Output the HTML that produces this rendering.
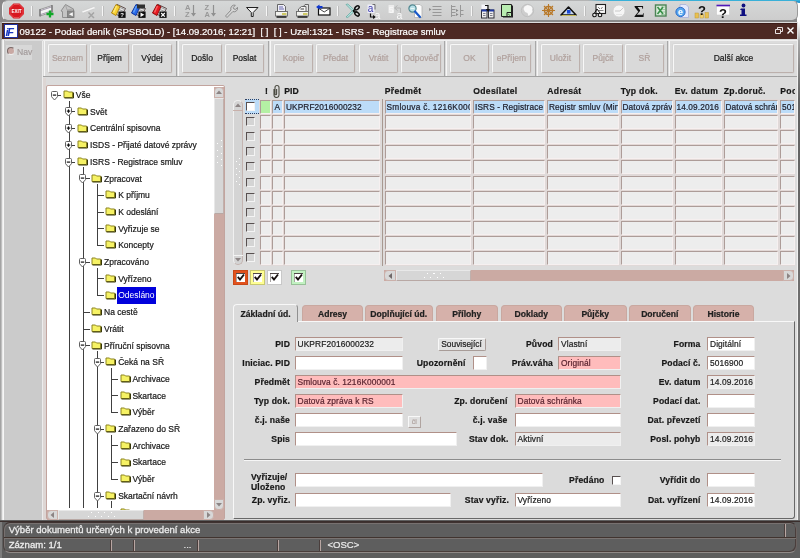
<!DOCTYPE html><html><head><meta charset="utf-8"><title>Podací deník</title><style>
*{box-sizing:border-box}
html,body{margin:0;padding:0}
body{width:800px;height:558px;overflow:hidden;position:relative;background:#dcdcdc;font-family:"Liberation Sans",Arial,sans-serif;font-size:8.5px;color:#202020;-webkit-text-stroke-width:0.2px}
#root{position:absolute;left:0;top:0;width:800px;height:558px;overflow:hidden;will-change:transform;opacity:0.999}
.a{position:absolute}
#tb{left:2px;top:0;width:796px;height:21px;background:linear-gradient(#d5d7d7,#cdcdcd);border-radius:6px;border:1px solid #f4f4f4;border-top-color:#b4b4b4;border-bottom-color:#8a8a8a;border-right-color:#9a9a9a}
.sep{position:absolute;top:5px;width:2px;height:11px;border-left:1px solid #f8f8f8;border-right:1px solid #b8b8b8}
.ic{position:absolute;top:0;overflow:visible}
#title{left:1.5px;top:22.6px;width:795.5px;height:16.9px;background:#4d2923;border-top:1px solid #3c1c18;color:#fff;font-size:9.55px;line-height:15.5px;white-space:pre}
#title span{position:absolute;left:18px;top:0}
#logo{left:2px;top:0;width:14px;height:14.5px;background:#fff;border:1px solid #2030a0}
#bar{left:43px;top:40px;width:755px;height:37px;background:#dcdcdc;border-bottom:1px solid #a2a2a2;border-top:1px solid #f0f0f0}
.grp{position:absolute;top:0;height:35px;border-left:1px solid #f6f6f6;border-right:1px solid #a8a8a8}
.btn{position:absolute;top:44px;height:29px;background:#d9d9d9;border:1px solid;border-color:#f8f8f8 #bcb0ac #bcb0ac #f8f8f8;border-radius:2px;text-align:center;line-height:27px;font-size:8.5px;color:#181818;box-shadow:0 0 0 1px #d6d6d6}
.btn.dis{color:#b0a09c}
#nav{left:4px;top:41px;width:38px;height:479px;background:#cbcbcb}
#tree{left:45.5px;top:85px;width:179.5px;height:435px;background:#fff;border:1px solid #c2a49e;border-left-width:1.5px;border-radius:2px}
.tr{position:absolute;height:17px;line-height:17px;font-size:8.5px;white-space:nowrap;color:#181818}
.tr.sel{background:#0000dc;color:#fff;-webkit-text-stroke-width:0;padding:0 1px;margin-left:-1px}
.vl{position:absolute;width:1px;background:#404040}
.hl{position:absolute;height:1px;background:#404040}
.cell{position:absolute;height:14px;background:#ededed;border:1px solid;border-color:#ad9c98 #f6f0f0 #f6f0f0 #ad9c98;box-shadow:0 0 0 0.5px #e6d8d5;letter-spacing:0.1px;font-size:8.3px;line-height:12px;padding-left:1px;white-space:nowrap;overflow:hidden;color:#1c1c28}
.cell.act{background:#bcdcf8}
.hd{position:absolute;top:84.5px;font-weight:bold;font-size:8.6px;line-height:12px;color:#181818;white-space:nowrap}
.cb{position:absolute;width:9px;height:9px;background:#d4d4d4;border:1px solid;border-color:#585050 #f4f4f4 #f4f4f4 #585050}
.tab{position:absolute;top:305px;height:16px;padding-top:1px;background:#d6b1aa;border-radius:4px 4px 0 0;text-align:center;font-weight:bold;font-size:8.6px;line-height:14px;color:#202020;border:1px solid #c9a8a0;border-bottom:none}
.tab.on{top:304px;height:18px;line-height:17px;background:#dbdbdb;border:1px solid #f8f8f8;border-right-color:#909090;border-bottom:none;z-index:3}
#pane{left:233px;top:321px;width:562px;height:197.5px;background:#dbdbdb;border:1px solid;border-color:#f8f8f8 #686868 #686868 #f8f8f8;border-right-width:1.5px;border-bottom-width:1.5px;border-radius:0 0 3px 0}
.lb{position:absolute;letter-spacing:0.15px;font-weight:bold;font-size:8.6px;line-height:14px;height:14px;text-align:right;white-space:nowrap;color:#181818}
.f{position:absolute;letter-spacing:0.1px;height:14px;background:#fff;border:1px solid;border-color:#b09088 #f0f0f0 #f0f0f0 #b09088;font-size:8.4px;line-height:12px;padding-left:2px;white-space:nowrap;overflow:hidden;color:#202020}
.f.g{background:#ececec}
.f.p{background:#ffbcbc;color:#5a2430}
#status{left:0;top:520px;width:800px;height:38px;background:#5e5e5e}
#sbox{left:3px;top:522px;width:793.5px;height:30.5px;border:1px solid;border-color:#3e3230 #6a6260 #908a88 #4a4240;border-radius:7px;box-shadow:inset 1px 1px 0 #777170,inset -1px -1px 0 #4a3e3c}
</style></head><body><div id="root">
<div class="a" style="left:0;top:0;width:800px;height:22px;background:linear-gradient(90deg,#8a8888 0,#8a8888 797px,#fff 797px)"></div>
<div class="a" style="left:0;top:22px;width:2px;height:18px;background:#a4a4a4"></div>
<div class="a" style="left:798px;top:22px;width:2px;height:18px;background:linear-gradient(#fff,#b0b0b0)"></div>
<div class="a" id="tb"></div>
<svg class="a" style="left:0;top:0" width="800" height="22" viewBox="0 0 800 22">
<g fill="none" stroke-width="1">
<path d="M31.5 6v10M102.5 6v10M174.5 6v10M266.5 6v10M337.5 6v10M471.5 6v10M584.5 6v10" stroke="#f6f6f6"/>
<path d="M32.5 6v10M103.5 6v10M175.5 6v10M267.5 6v10M338.5 6v10M472.5 6v10M585.5 6v10" stroke="#bdbdbd"/>
</g>
<!-- exit -->
<g transform="translate(9,3.5)"><path d="M4.5 0h6L15 4.5v6L10.5 15h-6L0 10.5v-6z" fill="#d81820"/><path d="M4.9 1h5.2L14 4.9v5.2L10.1 14H4.9L1 10.1V4.9z" fill="none" stroke="#f08080" stroke-width="0.5"/><text x="7.5" y="9.3" font-size="4.6" font-weight="bold" fill="#fff" text-anchor="middle">EXIT</text></g>
<!-- insert record -->
<g transform="translate(39,4)"><path d="M1 5.5L13 1.5v6.5L1 12z" fill="#f4f4f4" stroke="#9a9a9a" stroke-width="1"/><path d="M1 6.8L13 2.8M1 10.7L13 6.7" stroke="#a8a0b0" stroke-width="1.2"/><path d="M1 5v7.5M13 1v7.5" stroke="#686868" stroke-width="1.1"/><path d="M11 6.5v7M7.5 10h7" stroke="#10a828" stroke-width="2.3"/></g>
<!-- house -->
<g transform="translate(60,4)"><path d="M1 7L5.5 0.5 13.5 5v8.5H2.5V7.5z" fill="#c4c4c4" stroke="#8e8e8e" stroke-width="1"/><path d="M5.5 0.5L7 6l6.5-1" fill="none" stroke="#a0a0a0" stroke-width="0.8"/><rect x="7.5" y="7" width="6.5" height="6.5" fill="#8a8a8a" stroke="#787878" stroke-width="0.8"/><path d="M12.8 8.3v4l-4-2z" fill="#fafafa"/></g>
<!-- delete record (faded) -->
<g transform="translate(82,5)"><path d="M0.5 7L12.5 2.5" stroke="#f6f6f6" stroke-width="2.4"/><path d="M0.5 5.8L12.5 1.3M0.5 8.3L12.5 3.8" stroke="#c8c8c8" stroke-width="0.7"/><path d="M6.5 7.5l5.5 5.5M12 7.5l-5.5 5.5" stroke="#a4a4a4" stroke-width="1.5"/></g>
<!-- folders -->
<g transform="translate(111,4)"><path d="M6 0.5l8.5 4-4.5 8-9-4z" fill="#e4e4e4" stroke="#584848" stroke-width="1"/><path d="M8 3l5 2.3M7 5l5 2.3" stroke="#888" stroke-width="0.8"/><path d="M5 0.5l4 2-4 9-4.5-2.5z" fill="#f8d030" stroke="#b08818" stroke-width="1"/><path d="M5.5 2L2.5 8.5" stroke="#fce878" stroke-width="1.5"/><rect x="7.4" y="7.5" width="7.2" height="6.4" fill="#101010"/><text x="11" y="13.2" font-size="6" font-weight="bold" fill="#fff" text-anchor="middle">?</text></g>
<g transform="translate(131,4)"><path d="M6 0.5l8.5 4-4.5 8-9-4z" fill="#e4e4e4" stroke="#584848" stroke-width="1"/><path d="M8 3l5 2.3M7 5l5 2.3" stroke="#888" stroke-width="0.8"/><path d="M5 0.5l4 2-4 9-4.5-2.5z" fill="#2868e8" stroke="#1038a0" stroke-width="1"/><path d="M5.5 2L2.5 8.5" stroke="#60a0f8" stroke-width="1.5"/><rect x="6" y="0.5" width="8" height="4" fill="#303030"/><rect x="7.4" y="7.5" width="7.2" height="6.4" fill="#101010"/><path d="M9.5 8.5v4.4l3.8-2.2z" fill="#fff"/></g>
<g transform="translate(152,4)"><path d="M6 0.5l8.5 4-4.5 8-9-4z" fill="#e4e4e4" stroke="#584848" stroke-width="1"/><path d="M8 3l5 2.3M7 5l5 2.3" stroke="#888" stroke-width="0.8"/><path d="M5 0.5l4 2-4 9-4.5-2.5z" fill="#e81820" stroke="#901010" stroke-width="1"/><path d="M5.5 2L2.5 8.5" stroke="#f86060" stroke-width="1.5"/><rect x="7.4" y="7.5" width="7.2" height="6.4" fill="#101010"/><path d="M9.2 9l3.6 3.6M12.8 9l-3.6 3.6" stroke="#fff" stroke-width="1.3"/></g>
<!-- sort -->
<g fill="#989898" font-size="7.5" font-weight="bold"><text x="185" y="10">A</text><text x="185" y="17">Z</text><text x="204.5" y="10">Z</text><text x="204.5" y="17">A</text></g>
<path d="M193.5 5v10.5M213.5 5v10.5" stroke="#909090" stroke-width="1.2"/><path d="M191 13h5l-2.5 3.5zM211 13h5l-2.5 3.5z" fill="#909090"/>
<!-- wrench -->
<g transform="translate(225,4)"><path d="M0.5 12L6 6A3.6 3.6 0 0 1 10.3 1.2L8.3 3.5 8.9 5 10.6 5.4 12.5 3.3A3.6 3.6 0 0 1 7.8 7.6L2 13.5z" fill="#d6d6d6" stroke="#8c8c8c" stroke-width="1" stroke-linejoin="round"/></g>
<!-- funnel -->
<path d="M246.5 7.5h11.5l-4.8 5v4h-1.9v-4z" fill="#f4f4f4" stroke="#202020" stroke-width="1" stroke-linejoin="round"/>
<!-- printer 1 -->
<g transform="translate(275,4)"><path d="M2.5 7.5V0.5h6l2 2v5z" fill="#f0f0f8" stroke="#585858" stroke-width="0.9"/><path d="M4 3h4M4 5h5" stroke="#6868b0" stroke-width="1"/><rect x="0.5" y="7.5" width="12" height="4.5" fill="#f2f2ee" stroke="#686868" stroke-width="0.9"/><path d="M7 10h4.5" stroke="#c4bc38" stroke-width="1.5"/><path d="M1.5 13h10" stroke="#181818" stroke-width="1.5"/></g>
<!-- printer 2 -->
<g transform="translate(296,4)"><path d="M6 4.5L9 0.5h3.5v7" fill="#e4e4e4" stroke="#585858" stroke-width="0.9"/><path d="M2.5 7.5V5L5.5 2.5h4.5v5z" fill="#f4f4f4" stroke="#585858" stroke-width="0.9"/><path d="M4.5 5h3.5" stroke="#404040" stroke-width="1"/><rect x="0.5" y="7.5" width="12" height="4.5" fill="#f2f2ee" stroke="#686868" stroke-width="0.9"/><path d="M7 10h4.5" stroke="#c4bc38" stroke-width="1.5"/><path d="M1.5 13h10" stroke="#181818" stroke-width="1.5"/></g>
<!-- mail -->
<g transform="translate(316,4.5)"><rect x="2.5" y="3.5" width="11.5" height="7" fill="#fff" stroke="#101010" stroke-width="1.2"/><path d="M3 4l5.2 3.5 5.3-3.5" fill="none" stroke="#303030" stroke-width="0.9"/><path d="M0 2.5l3.5-2.5v1.5h3v2.2h-3V5z" fill="#1038d0"/></g>
<!-- scissors -->
<g transform="translate(346,4)"><path d="M0 0.5L1.8 0 8.5 6.2 7 7.5z" fill="#b4e0dc" stroke="#5aa49c" stroke-width="0.7"/><path d="M0 13L1.8 13.5 8.5 7.3 7 6z" fill="#b4e0dc" stroke="#5aa49c" stroke-width="0.7"/><g fill="none" stroke="#101010" stroke-width="1.5"><ellipse cx="11" cy="3.8" rx="2.5" ry="1.6" transform="rotate(-40 11 3.8)"/><ellipse cx="11" cy="10" rx="2.5" ry="1.6" transform="rotate(40 11 10)"/><path d="M7 6.8l2.5-1.5M7 6.8l2.5 1.8"/></g></g>
<!-- copy a -->
<g transform="translate(367,3)"><rect x="0.5" y="1.5" width="7" height="8.5" fill="#f0f0fa"/><text x="0.8" y="9" font-size="10" fill="#3838a8">a</text><text x="7.5" y="16" font-size="10.5" fill="#fbfbfb">a</text><path d="M3.5 10.5v3.5h3" fill="none" stroke="#101010" stroke-width="1.2"/><path d="M6 12l3 2-3 2z" fill="#101010"/><path d="M5.5 1.5h2.5v5" fill="none" stroke="#404040" stroke-width="0.7"/></g>
<!-- faded paste -->
<g transform="translate(388,3)"><rect x="0.5" y="2" width="5.5" height="8" fill="#ececec"/><text x="0.8" y="9.5" font-size="9" fill="#fafafa">5</text><text x="8.5" y="16" font-size="10.5" fill="#fafafa">a</text><path d="M7 5h5.5v5" fill="none" stroke="#b4b4b4" stroke-width="1"/><path d="M9.5 2.5L6.5 5l3 2.5" fill="none" stroke="#b4b4b4" stroke-width="1"/></g>
<!-- search -->
<g transform="translate(408,3.5)"><path d="M6.5 1h5.5l2 2v11H6.5z" fill="#fcfcfc" stroke="#b0b0b0" stroke-width="0.8"/><circle cx="4.5" cy="5" r="3.6" fill="#b8e0e8" stroke="#508890" stroke-width="1.2"/><path d="M2.5 5h4" stroke="#e8f8f8" stroke-width="1"/><path d="M7 8l5 5.5" stroke="#1858c8" stroke-width="2.2" stroke-linecap="round"/></g>
<!-- list -->
<g stroke="#989898" stroke-width="1" fill="none"><path d="M432.5 6.5h9M432.5 9.5h9M432.5 12.5h9M432.5 15.5h9"/></g><path d="M429 8l2.5 1.5-2.5 1.5z" fill="#8c8c8c"/>
<!-- tree -->
<g stroke="#989898" stroke-width="1" fill="none"><path d="M451.5 5v12M451.5 6.5h4M451.5 9.5h4M451.5 12.5h4M451.5 15.5h4M460.5 5v12M460.5 10.5h3M460.5 14.5h3"/></g><path d="M456 9l2.5 1.5-2.5 1.5zM456 13l2.5 1.5-2.5 1.5z" fill="#8c8c8c"/>
<!-- blue boxes -->
<g transform="translate(481,4)"><rect x="0.5" y="0.5" width="5.5" height="5" fill="#f6f6fa"/><rect x="0.5" y="6" width="5.5" height="8" fill="#eeeeee" stroke="#303038" stroke-width="1"/><rect x="7.5" y="6" width="5.5" height="8" fill="#eeeeee" stroke="#303038" stroke-width="1"/><path d="M0.5 6.5h5.5M7.5 6.5h5.5" stroke="#2038a0" stroke-width="1.8"/><path d="M2 9.5h2.5M2 11.5h2.5M9 9.5h2.5M9 11.5h2.5" stroke="#707080" stroke-width="0.9"/><path d="M4 1.5h3v4" fill="none" stroke="#101010" stroke-width="1.2"/><path d="M4.8 5h4.4l-2.2 3z" fill="#101010"/></g>
<!-- green note -->
<g transform="translate(501,4)"><path d="M2 1.5h10v12h-10z" fill="#202020"/><path d="M0.5 0.5h10v12h-10z" fill="#b8ecb0" stroke="#202020" stroke-width="1"/><path d="M6 12.5v-4h4.5" fill="none" stroke="#202020" stroke-width="1"/><path d="M7 10l2 1.5" stroke="#406040" stroke-width="0.8"/></g>
<!-- globe -->
<g transform="translate(521,4)"><circle cx="6.5" cy="6.5" r="6.2" fill="#cdcdcd" stroke="#bcbcbc" stroke-width="0.8"/><path d="M3.5 2.5l3-1.5 3.5 1 1.5 2-.5 2 .5 1.5-1.5 2.5-2.5 2-1-3-2.5-1L2.5 5z" fill="#f8f8f8"/></g>
<!-- wheel -->
<g transform="translate(542,4)" stroke="#b87828" fill="none"><circle cx="6.5" cy="6.5" r="4" stroke-width="1.6"/><circle cx="6.5" cy="6.5" r="1.3" fill="#c87818" stroke-width="0.8"/><path d="M6.5 0v13M0 6.5h13M2 2l9 9M11 2l-9 9" stroke-width="1.1"/></g>
<!-- triangle -->
<g transform="translate(561,6.5)"><path d="M7.5 0.5L15 8.5H0z" fill="#c8d8f0" stroke="#101010" stroke-width="1.6" stroke-linejoin="round"/><path d="M0.5 9h14.5" stroke="#e8d860" stroke-width="0.8"/><rect x="6" y="3.5" width="3.5" height="3.5" fill="#1848d8"/></g>
<!-- doc glasses -->
<g transform="translate(592,4)"><rect x="4" y="0.5" width="9.5" height="9" fill="#f8f8f8" stroke="#202020" stroke-width="1.1"/><path d="M6 3l2 2M10.5 3l-1.5 2M6.5 6.5h5" stroke="#606060" stroke-width="0.8"/><circle cx="2.5" cy="11" r="1.8" fill="#e8e8e8" stroke="#101010" stroke-width="1.1"/><circle cx="8" cy="11" r="1.8" fill="#e8e8e8" stroke="#101010" stroke-width="1.1"/><path d="M2.5 9L5 5l3 4" fill="none" stroke="#101010" stroke-width="1"/></g>
<!-- round white -->
<g transform="translate(613,4.5)"><circle cx="6" cy="6.5" r="6" fill="#f6f6f6" stroke="#d0d0d0" stroke-width="0.8"/><path d="M2 6.5h5l3-3" fill="none" stroke="#c8c8c8" stroke-width="1"/><path d="M3.5 10h5" stroke="#d4d4d4" stroke-width="1" stroke-dasharray="1 1"/></g>
<!-- sigma -->
<text x="634" y="16.5" font-size="16" font-weight="bold" font-family="Liberation Serif, serif" fill="#101010">Σ</text>
<!-- excel -->
<g transform="translate(655,4.5)"><rect x="0.5" y="0.5" width="10.5" height="11" fill="#dcecdc" stroke="#4c8454" stroke-width="1.4"/><path d="M6 2.5h4M6 5h4M6 7.5h4M6 10h4" stroke="#90c098" stroke-width="0.8"/><path d="M2.5 2.5L8 9.5M8 2.5L2.5 9.5" stroke="#389048" stroke-width="1.6"/></g>
<!-- IE -->
<g transform="translate(675,4)"><path d="M5 0.5h6l2.5 2.5v10.5H5z" fill="#e4e8fc" stroke="#a8b0d8" stroke-width="0.8"/><circle cx="5.5" cy="8" r="4.6" fill="#58a8f0" stroke="#2868c8" stroke-width="1"/><text x="5.5" y="11" font-size="9" font-weight="bold" fill="#fff" text-anchor="middle">e</text></g>
<!-- ? gold -->
<g transform="translate(694,3)"><rect x="1" y="10" width="3.5" height="5" fill="#e8c050" stroke="#c09830" stroke-width="0.5"/><rect x="6" y="11" width="3.5" height="4" fill="#f0d070" stroke="#c09830" stroke-width="0.5"/><rect x="11" y="9.5" width="3.5" height="5.5" fill="#e8c050" stroke="#c09830" stroke-width="0.5"/><text x="8" y="11.5" font-size="13" font-weight="bold" fill="#101010" text-anchor="middle">?</text></g>
<!-- ? box -->
<g transform="translate(716,4)"><rect x="0.5" y="2" width="13" height="9" fill="#fcfcfc" stroke="#c8c8c8" stroke-width="0.6"/><path d="M0.5 1.5h13.5" stroke="#5018b8" stroke-width="1.6"/><text x="7" y="13.5" font-size="13" font-weight="bold" fill="#101010" text-anchor="middle">?</text></g>
<!-- i -->
<g fill="#101080"><circle cx="743.5" cy="5.5" r="1.9"/><path d="M741 8.5h4v6h1.5v1.5h-6.5v-1.5h1.5v-4.5h-1.5z"/></g>
</svg>

<div class="a" style="left:588px;top:0;width:212px;height:1px;background:linear-gradient(90deg,#b4b4b4,#38b0d8 20px);z-index:5"></div>
<div class="a" style="left:796px;top:0;width:4px;height:3px;background:#2898d0;z-index:4;border-radius:0 0 0 3px"></div>
<div class="a" id="title"><div class="a" id="logo"><svg style="position:absolute;left:0;top:0" width="12" height="13" viewBox="0 0 12 13"><text x="0.5" y="10.5" font-size="11" font-weight="bold" font-style="italic" fill="#1838c0" letter-spacing="-1.2">iF</text></svg></div><span>09122 - Podací deník (SPSBOLD) - [14.09.2016; 12:21]  [ ]  [ ] - Uzel:1321 - ISRS - Registrace smluv</span></div>
<svg class="a" style="left:770px;top:23px" width="28" height="16" viewBox="0 0 28 16"><g fill="none" stroke="#e8e0e0" stroke-width="1"><path d="M5.5 6.5h5v4h-5z"/><path d="M7.5 6.5v-2h5v4h-2"/></g><path d="M17.5 4.5l6 6M23.5 4.5l-6 6" stroke="#fff" stroke-width="1.4"/></svg>
<div class="a" style="left:0;top:40px;width:4.5px;height:480px;background:linear-gradient(90deg,#a0a0a0 0,#a8a8a8 1px,#d8d8d8 2px,#fafafa 3px,#f4f4f4 4px,#cbcbcb 4.5px)"></div>
<div class="a" id="nav"></div>
<div class="a" style="left:6px;top:45px;width:26px;height:15px;background:#d8d8d8"></div>
<div class="a" style="left:7px;top:47px;width:8px;height:8px;border-radius:50%;background:#c9a9a4;border:1px solid #7a6a68;border-bottom-color:#f0f0f0;border-right-color:#e0e0e0"></div>
<div class="a" style="left:17px;top:46px;font-size:8.6px;line-height:12px;color:#a49c9c">Nav</div>
<div class="a" style="left:42px;top:41px;width:1px;height:479px;background:#ececec"></div>
<div class="a" style="left:43px;top:78px;width:3px;height:442px;background:#ddd6d4"></div>
<div class="a" id="bar"></div>
<div class="grp" style="left:44px;top:41px;width:133px"></div>
<div class="grp" style="left:178px;top:41px;width:91px"></div>
<div class="grp" style="left:270px;top:41px;width:175px"></div>
<div class="grp" style="left:446px;top:41px;width:90px"></div>
<div class="grp" style="left:537px;top:41px;width:131px"></div>
<div class="grp" style="left:669px;top:41px;width:129px"></div>
<div class="btn dis" style="left:48px;width:39px">Seznam</div>
<div class="btn" style="left:90px;width:39px">Příjem</div>
<div class="btn" style="left:132px;width:40px">Výdej</div>
<div class="btn" style="left:182px;width:40px">Došlo</div>
<div class="btn" style="left:225px;width:39px">Poslat</div>
<div class="btn dis" style="left:274px;width:39px">Kopie</div>
<div class="btn dis" style="left:316px;width:39px">Předat</div>
<div class="btn dis" style="left:359px;width:39px">Vrátit</div>
<div class="btn dis" style="left:401px;width:40px">Odpověď</div>
<div class="btn dis" style="left:450px;width:39px">OK</div>
<div class="btn dis" style="left:492px;width:39px">ePříjem</div>
<div class="btn dis" style="left:541px;width:39px">Uložit</div>
<div class="btn dis" style="left:583px;width:40px">Půjčit</div>
<div class="btn dis" style="left:625px;width:39px">SŘ</div>
<div class="btn" style="left:673px;width:121px">Další akce</div>
<div class="a" id="tree"></div>
<div class="a" style="left:47px;top:86px;width:166px;height:424px;overflow:hidden">
<div class="vl" style="left:21.5px;top:14.5px;height:407.34px"></div>
<div class="vl" style="left:35.8px;top:81.3px;height:340.54px"></div>
<div class="vl" style="left:50.1px;top:98px;height:61.8px"></div>
<div class="vl" style="left:50.1px;top:181.5px;height:28.4px"></div>
<div class="vl" style="left:50.1px;top:265px;height:156.84px"></div>
<div class="vl" style="left:64.4px;top:281.7px;height:45.1px"></div>
<div class="vl" style="left:64.4px;top:348.5px;height:45.1px"></div>
<div class="vl" style="left:64.4px;top:415.3px;height:6.54px"></div>
<div class="hl" style="left:10.2px;top:8.7px;width:4.3px"></div>
<svg class="a" style="left:3.7px;top:4.7px" width="8" height="10" viewBox="0 0 8 10"><path d="M0.5 1.5Q0.5 0.5 1.5 0.5h4Q6.5 0.5 6.5 1.5v4.2L3.5 9 0.5 5.7z" fill="#fff" stroke="#606060" stroke-width="1"/><path d="M1.8 4.1h3.4" stroke="#101010" stroke-width="1.2"/></svg>
<svg class="a" style="left:15.5px;top:4.1px" width="12" height="10" viewBox="0 0 12 10"><path d="M1 1h3.5l1 1h4v5.5h-8.5z" fill="#f6f264" stroke="#8c8420" stroke-width="1"/><path d="M1.5 8h9v-5.5" fill="none" stroke="#383808" stroke-width="1"/></svg>
<div class="tr" style="left:28.8px;top:1px">Vše</div>
<div class="hl" style="left:21.5px;top:25.4px;width:6.8px"></div>
<svg class="a" style="left:18px;top:21.4px" width="8" height="10" viewBox="0 0 8 10"><path d="M0.5 1.5Q0.5 0.5 1.5 0.5h4Q6.5 0.5 6.5 1.5v4.2L3.5 9 0.5 5.7z" fill="#fff" stroke="#606060" stroke-width="1"/><path d="M1.8 4.1h3.4" stroke="#101010" stroke-width="1.2"/><path d="M3.5 2.4v3.4" stroke="#101010" stroke-width="1.2"/></svg>
<svg class="a" style="left:29.8px;top:20.8px" width="12" height="10" viewBox="0 0 12 10"><path d="M1 1h3.5l1 1h4v5.5h-8.5z" fill="#f6f264" stroke="#8c8420" stroke-width="1"/><path d="M1.5 8h9v-5.5" fill="none" stroke="#383808" stroke-width="1"/></svg>
<div class="tr" style="left:43px;top:17.7px">Svět</div>
<div class="hl" style="left:21.5px;top:42.1px;width:6.8px"></div>
<svg class="a" style="left:18px;top:38.1px" width="8" height="10" viewBox="0 0 8 10"><path d="M0.5 1.5Q0.5 0.5 1.5 0.5h4Q6.5 0.5 6.5 1.5v4.2L3.5 9 0.5 5.7z" fill="#fff" stroke="#606060" stroke-width="1"/><path d="M1.8 4.1h3.4" stroke="#101010" stroke-width="1.2"/><path d="M3.5 2.4v3.4" stroke="#101010" stroke-width="1.2"/></svg>
<svg class="a" style="left:29.8px;top:37.5px" width="12" height="10" viewBox="0 0 12 10"><path d="M1 1h3.5l1 1h4v5.5h-8.5z" fill="#f6f264" stroke="#8c8420" stroke-width="1"/><path d="M1.5 8h9v-5.5" fill="none" stroke="#383808" stroke-width="1"/></svg>
<div class="tr" style="left:43px;top:34.4px">Centrální spisovna</div>
<div class="hl" style="left:21.5px;top:58.8px;width:6.8px"></div>
<svg class="a" style="left:18px;top:54.8px" width="8" height="10" viewBox="0 0 8 10"><path d="M0.5 1.5Q0.5 0.5 1.5 0.5h4Q6.5 0.5 6.5 1.5v4.2L3.5 9 0.5 5.7z" fill="#fff" stroke="#606060" stroke-width="1"/><path d="M1.8 4.1h3.4" stroke="#101010" stroke-width="1.2"/><path d="M3.5 2.4v3.4" stroke="#101010" stroke-width="1.2"/></svg>
<svg class="a" style="left:29.8px;top:54.2px" width="12" height="10" viewBox="0 0 12 10"><path d="M1 1h3.5l1 1h4v5.5h-8.5z" fill="#f6f264" stroke="#8c8420" stroke-width="1"/><path d="M1.5 8h9v-5.5" fill="none" stroke="#383808" stroke-width="1"/></svg>
<div class="tr" style="left:43px;top:51.1px">ISDS - Přijaté datové zprávy</div>
<div class="hl" style="left:21.5px;top:75.5px;width:6.8px"></div>
<svg class="a" style="left:18px;top:71.5px" width="8" height="10" viewBox="0 0 8 10"><path d="M0.5 1.5Q0.5 0.5 1.5 0.5h4Q6.5 0.5 6.5 1.5v4.2L3.5 9 0.5 5.7z" fill="#fff" stroke="#606060" stroke-width="1"/><path d="M1.8 4.1h3.4" stroke="#101010" stroke-width="1.2"/></svg>
<svg class="a" style="left:29.8px;top:70.9px" width="12" height="10" viewBox="0 0 12 10"><path d="M1 1h3.5l1 1h4v5.5h-8.5z" fill="#f6f264" stroke="#8c8420" stroke-width="1"/><path d="M1.5 8h9v-5.5" fill="none" stroke="#383808" stroke-width="1"/></svg>
<div class="tr" style="left:43px;top:67.8px">ISRS - Registrace smluv</div>
<div class="hl" style="left:35.8px;top:92.2px;width:6.8px"></div>
<svg class="a" style="left:32.3px;top:88.2px" width="8" height="10" viewBox="0 0 8 10"><path d="M0.5 1.5Q0.5 0.5 1.5 0.5h4Q6.5 0.5 6.5 1.5v4.2L3.5 9 0.5 5.7z" fill="#fff" stroke="#606060" stroke-width="1"/><path d="M1.8 4.1h3.4" stroke="#101010" stroke-width="1.2"/></svg>
<svg class="a" style="left:44.1px;top:87.6px" width="12" height="10" viewBox="0 0 12 10"><path d="M1 1h3.5l1 1h4v5.5h-8.5z" fill="#f6f264" stroke="#8c8420" stroke-width="1"/><path d="M1.5 8h9v-5.5" fill="none" stroke="#383808" stroke-width="1"/></svg>
<div class="tr" style="left:57.1px;top:84.5px">Zpracovat</div>
<div class="hl" style="left:50.1px;top:108.9px;width:6.8px"></div>
<svg class="a" style="left:58.4px;top:104.3px" width="12" height="10" viewBox="0 0 12 10"><path d="M1 1h3.5l1 1h4v5.5h-8.5z" fill="#f6f264" stroke="#8c8420" stroke-width="1"/><path d="M1.5 8h9v-5.5" fill="none" stroke="#383808" stroke-width="1"/></svg>
<div class="tr" style="left:71.2px;top:101.2px">K příjmu</div>
<div class="hl" style="left:50.1px;top:125.6px;width:6.8px"></div>
<svg class="a" style="left:58.4px;top:121px" width="12" height="10" viewBox="0 0 12 10"><path d="M1 1h3.5l1 1h4v5.5h-8.5z" fill="#f6f264" stroke="#8c8420" stroke-width="1"/><path d="M1.5 8h9v-5.5" fill="none" stroke="#383808" stroke-width="1"/></svg>
<div class="tr" style="left:71.2px;top:117.9px">K odeslání</div>
<div class="hl" style="left:50.1px;top:142.3px;width:6.8px"></div>
<svg class="a" style="left:58.4px;top:137.7px" width="12" height="10" viewBox="0 0 12 10"><path d="M1 1h3.5l1 1h4v5.5h-8.5z" fill="#f6f264" stroke="#8c8420" stroke-width="1"/><path d="M1.5 8h9v-5.5" fill="none" stroke="#383808" stroke-width="1"/></svg>
<div class="tr" style="left:71.2px;top:134.6px">Vyřizuje se</div>
<div class="hl" style="left:50.1px;top:159px;width:6.8px"></div>
<svg class="a" style="left:58.4px;top:154.4px" width="12" height="10" viewBox="0 0 12 10"><path d="M1 1h3.5l1 1h4v5.5h-8.5z" fill="#f6f264" stroke="#8c8420" stroke-width="1"/><path d="M1.5 8h9v-5.5" fill="none" stroke="#383808" stroke-width="1"/></svg>
<div class="tr" style="left:71.2px;top:151.3px">Koncepty</div>
<div class="hl" style="left:35.8px;top:175.7px;width:6.8px"></div>
<svg class="a" style="left:32.3px;top:171.7px" width="8" height="10" viewBox="0 0 8 10"><path d="M0.5 1.5Q0.5 0.5 1.5 0.5h4Q6.5 0.5 6.5 1.5v4.2L3.5 9 0.5 5.7z" fill="#fff" stroke="#606060" stroke-width="1"/><path d="M1.8 4.1h3.4" stroke="#101010" stroke-width="1.2"/></svg>
<svg class="a" style="left:44.1px;top:171.1px" width="12" height="10" viewBox="0 0 12 10"><path d="M1 1h3.5l1 1h4v5.5h-8.5z" fill="#f6f264" stroke="#8c8420" stroke-width="1"/><path d="M1.5 8h9v-5.5" fill="none" stroke="#383808" stroke-width="1"/></svg>
<div class="tr" style="left:57.1px;top:168px">Zpracováno</div>
<div class="hl" style="left:50.1px;top:192.4px;width:6.8px"></div>
<svg class="a" style="left:58.4px;top:187.8px" width="12" height="10" viewBox="0 0 12 10"><path d="M1 1h3.5l1 1h4v5.5h-8.5z" fill="#f6f264" stroke="#8c8420" stroke-width="1"/><path d="M1.5 8h9v-5.5" fill="none" stroke="#383808" stroke-width="1"/></svg>
<div class="tr" style="left:71.2px;top:184.7px">Vyřízeno</div>
<div class="hl" style="left:50.1px;top:209.1px;width:6.8px"></div>
<svg class="a" style="left:58.4px;top:204.5px" width="12" height="10" viewBox="0 0 12 10"><path d="M1 1h3.5l1 1h4v5.5h-8.5z" fill="#f6f264" stroke="#8c8420" stroke-width="1"/><path d="M1.5 8h9v-5.5" fill="none" stroke="#383808" stroke-width="1"/></svg>
<div class="tr sel" style="left:71.2px;top:201.4px">Odesláno</div>
<div class="hl" style="left:35.8px;top:225.8px;width:6.8px"></div>
<svg class="a" style="left:44.1px;top:221.2px" width="12" height="10" viewBox="0 0 12 10"><path d="M1 1h3.5l1 1h4v5.5h-8.5z" fill="#f6f264" stroke="#8c8420" stroke-width="1"/><path d="M1.5 8h9v-5.5" fill="none" stroke="#383808" stroke-width="1"/></svg>
<div class="tr" style="left:57.1px;top:218.1px">Na cestě</div>
<div class="hl" style="left:35.8px;top:242.5px;width:6.8px"></div>
<svg class="a" style="left:44.1px;top:237.9px" width="12" height="10" viewBox="0 0 12 10"><path d="M1 1h3.5l1 1h4v5.5h-8.5z" fill="#f6f264" stroke="#8c8420" stroke-width="1"/><path d="M1.5 8h9v-5.5" fill="none" stroke="#383808" stroke-width="1"/></svg>
<div class="tr" style="left:57.1px;top:234.8px">Vrátit</div>
<div class="hl" style="left:35.8px;top:259.2px;width:6.8px"></div>
<svg class="a" style="left:32.3px;top:255.2px" width="8" height="10" viewBox="0 0 8 10"><path d="M0.5 1.5Q0.5 0.5 1.5 0.5h4Q6.5 0.5 6.5 1.5v4.2L3.5 9 0.5 5.7z" fill="#fff" stroke="#606060" stroke-width="1"/><path d="M1.8 4.1h3.4" stroke="#101010" stroke-width="1.2"/></svg>
<svg class="a" style="left:44.1px;top:254.6px" width="12" height="10" viewBox="0 0 12 10"><path d="M1 1h3.5l1 1h4v5.5h-8.5z" fill="#f6f264" stroke="#8c8420" stroke-width="1"/><path d="M1.5 8h9v-5.5" fill="none" stroke="#383808" stroke-width="1"/></svg>
<div class="tr" style="left:57.1px;top:251.5px">Příruční spisovna</div>
<div class="hl" style="left:50.1px;top:275.9px;width:6.8px"></div>
<svg class="a" style="left:46.6px;top:271.9px" width="8" height="10" viewBox="0 0 8 10"><path d="M0.5 1.5Q0.5 0.5 1.5 0.5h4Q6.5 0.5 6.5 1.5v4.2L3.5 9 0.5 5.7z" fill="#fff" stroke="#606060" stroke-width="1"/><path d="M1.8 4.1h3.4" stroke="#101010" stroke-width="1.2"/></svg>
<svg class="a" style="left:58.4px;top:271.3px" width="12" height="10" viewBox="0 0 12 10"><path d="M1 1h3.5l1 1h4v5.5h-8.5z" fill="#f6f264" stroke="#8c8420" stroke-width="1"/><path d="M1.5 8h9v-5.5" fill="none" stroke="#383808" stroke-width="1"/></svg>
<div class="tr" style="left:71.2px;top:268.2px">Čeká na SŘ</div>
<div class="hl" style="left:64.4px;top:292.6px;width:6.8px"></div>
<svg class="a" style="left:72.7px;top:288px" width="12" height="10" viewBox="0 0 12 10"><path d="M1 1h3.5l1 1h4v5.5h-8.5z" fill="#f6f264" stroke="#8c8420" stroke-width="1"/><path d="M1.5 8h9v-5.5" fill="none" stroke="#383808" stroke-width="1"/></svg>
<div class="tr" style="left:85.4px;top:284.9px">Archivace</div>
<div class="hl" style="left:64.4px;top:309.3px;width:6.8px"></div>
<svg class="a" style="left:72.7px;top:304.7px" width="12" height="10" viewBox="0 0 12 10"><path d="M1 1h3.5l1 1h4v5.5h-8.5z" fill="#f6f264" stroke="#8c8420" stroke-width="1"/><path d="M1.5 8h9v-5.5" fill="none" stroke="#383808" stroke-width="1"/></svg>
<div class="tr" style="left:85.4px;top:301.6px">Skartace</div>
<div class="hl" style="left:64.4px;top:326px;width:6.8px"></div>
<svg class="a" style="left:72.7px;top:321.4px" width="12" height="10" viewBox="0 0 12 10"><path d="M1 1h3.5l1 1h4v5.5h-8.5z" fill="#f6f264" stroke="#8c8420" stroke-width="1"/><path d="M1.5 8h9v-5.5" fill="none" stroke="#383808" stroke-width="1"/></svg>
<div class="tr" style="left:85.4px;top:318.3px">Výběr</div>
<div class="hl" style="left:50.1px;top:342.7px;width:6.8px"></div>
<svg class="a" style="left:46.6px;top:338.7px" width="8" height="10" viewBox="0 0 8 10"><path d="M0.5 1.5Q0.5 0.5 1.5 0.5h4Q6.5 0.5 6.5 1.5v4.2L3.5 9 0.5 5.7z" fill="#fff" stroke="#606060" stroke-width="1"/><path d="M1.8 4.1h3.4" stroke="#101010" stroke-width="1.2"/></svg>
<svg class="a" style="left:58.4px;top:338.1px" width="12" height="10" viewBox="0 0 12 10"><path d="M1 1h3.5l1 1h4v5.5h-8.5z" fill="#f6f264" stroke="#8c8420" stroke-width="1"/><path d="M1.5 8h9v-5.5" fill="none" stroke="#383808" stroke-width="1"/></svg>
<div class="tr" style="left:71.2px;top:335px">Zařazeno do SŘ</div>
<div class="hl" style="left:64.4px;top:359.4px;width:6.8px"></div>
<svg class="a" style="left:72.7px;top:354.8px" width="12" height="10" viewBox="0 0 12 10"><path d="M1 1h3.5l1 1h4v5.5h-8.5z" fill="#f6f264" stroke="#8c8420" stroke-width="1"/><path d="M1.5 8h9v-5.5" fill="none" stroke="#383808" stroke-width="1"/></svg>
<div class="tr" style="left:85.4px;top:351.7px">Archivace</div>
<div class="hl" style="left:64.4px;top:376.1px;width:6.8px"></div>
<svg class="a" style="left:72.7px;top:371.5px" width="12" height="10" viewBox="0 0 12 10"><path d="M1 1h3.5l1 1h4v5.5h-8.5z" fill="#f6f264" stroke="#8c8420" stroke-width="1"/><path d="M1.5 8h9v-5.5" fill="none" stroke="#383808" stroke-width="1"/></svg>
<div class="tr" style="left:85.4px;top:368.4px">Skartace</div>
<div class="hl" style="left:64.4px;top:392.8px;width:6.8px"></div>
<svg class="a" style="left:72.7px;top:388.2px" width="12" height="10" viewBox="0 0 12 10"><path d="M1 1h3.5l1 1h4v5.5h-8.5z" fill="#f6f264" stroke="#8c8420" stroke-width="1"/><path d="M1.5 8h9v-5.5" fill="none" stroke="#383808" stroke-width="1"/></svg>
<div class="tr" style="left:85.4px;top:385.1px">Výběr</div>
<div class="hl" style="left:50.1px;top:409.5px;width:6.8px"></div>
<svg class="a" style="left:46.6px;top:405.5px" width="8" height="10" viewBox="0 0 8 10"><path d="M0.5 1.5Q0.5 0.5 1.5 0.5h4Q6.5 0.5 6.5 1.5v4.2L3.5 9 0.5 5.7z" fill="#fff" stroke="#606060" stroke-width="1"/><path d="M1.8 4.1h3.4" stroke="#101010" stroke-width="1.2"/></svg>
<svg class="a" style="left:58.4px;top:404.9px" width="12" height="10" viewBox="0 0 12 10"><path d="M1 1h3.5l1 1h4v5.5h-8.5z" fill="#f6f264" stroke="#8c8420" stroke-width="1"/><path d="M1.5 8h9v-5.5" fill="none" stroke="#383808" stroke-width="1"/></svg>
<div class="tr" style="left:71.2px;top:401.8px">Skartační návrh</div>
<div class="hl" style="left:64.4px;top:426.2px;width:6.8px"></div>
<svg class="a" style="left:72.7px;top:421.6px" width="12" height="10" viewBox="0 0 12 10"><path d="M1 1h3.5l1 1h4v5.5h-8.5z" fill="#f6f264" stroke="#8c8420" stroke-width="1"/><path d="M1.5 8h9v-5.5" fill="none" stroke="#383808" stroke-width="1"/></svg>
</div>
<div class="a" style="left:214px;top:87px;width:10px;height:423px;background:#cbaaa3"></div>
<div class="a" style="left:214px;top:87px;width:10px;height:11px;background:#d8d8d8;border:1px solid #cbb0aa;border-radius:4px 4px 0 0"></div>
<svg class="a" style="left:216px;top:90px" width="6" height="4"><path d="M0 4L3 0.5 6 4z" fill="#8c8484"/></svg>
<div class="a" style="left:214px;top:98px;width:10px;height:116px;background:#d6d6d6;border:1px solid #e8e8e8;border-right-color:#c0b0ac;border-bottom-color:#b8a8a4"></div>
<div class="a" style="left:214px;top:499px;width:10px;height:11px;background:#d8d8d8;border:1px solid #cbb0aa;border-radius:0 0 4px 4px"></div>
<svg class="a" style="left:216px;top:503px" width="6" height="4"><path d="M0 0L3 3.5 6 0z" fill="#8c8484"/></svg>
<div class="a" style="left:220.5px;top:140px;width:1.2px;height:1.2px;background:#fff"></div>
<div class="a" style="left:220.5px;top:146.3px;width:1.2px;height:1.2px;background:#fff"></div>
<div class="a" style="left:220.5px;top:152.6px;width:1.2px;height:1.2px;background:#fff"></div>
<div class="a" style="left:220.5px;top:158.9px;width:1.2px;height:1.2px;background:#fff"></div>
<div class="a" style="left:220.5px;top:165.2px;width:1.2px;height:1.2px;background:#fff"></div>
<div class="a" style="left:216.8px;top:143.3px;width:1.2px;height:1.2px;background:#fff"></div>
<div class="a" style="left:216.8px;top:149.6px;width:1.2px;height:1.2px;background:#fff"></div>
<div class="a" style="left:216.8px;top:155.9px;width:1.2px;height:1.2px;background:#fff"></div>
<div class="a" style="left:216.8px;top:162.2px;width:1.2px;height:1.2px;background:#fff"></div>
<div class="a" style="left:47px;top:510px;width:177px;height:10px;background:#cbaaa3"></div>
<div class="a" style="left:47px;top:510px;width:11px;height:10px;background:#d8d8d8;border:1px solid #cbb0aa;border-radius:4px 0 0 4px"></div>
<svg class="a" style="left:50px;top:512px" width="4" height="6"><path d="M4 0L0.5 3 4 6z" fill="#8c8484"/></svg>
<div class="a" style="left:58px;top:510px;width:86px;height:10px;background:#d6d6d6;border:1px solid #e8e8e8;border-right-color:#c0b0ac;border-bottom-color:#b8a8a4"></div>
<div class="a" style="left:203px;top:510px;width:11px;height:10px;background:#d8d8d8;border:1px solid #cbb0aa;border-radius:0 4px 4px 0"></div>
<svg class="a" style="left:207px;top:512px" width="4" height="6"><path d="M0 0L3.5 3 0 6z" fill="#8c8484"/></svg>
<div class="a" style="left:91px;top:512.2px;width:1.2px;height:1.2px;background:#fff"></div>
<div class="a" style="left:97.5px;top:512.2px;width:1.2px;height:1.2px;background:#fff"></div>
<div class="a" style="left:104px;top:512.2px;width:1.2px;height:1.2px;background:#fff"></div>
<div class="a" style="left:110.5px;top:512.2px;width:1.2px;height:1.2px;background:#fff"></div>
<div class="a" style="left:88px;top:516px;width:1.2px;height:1.2px;background:#fff"></div>
<div class="a" style="left:94.5px;top:516px;width:1.2px;height:1.2px;background:#fff"></div>
<div class="a" style="left:101px;top:516px;width:1.2px;height:1.2px;background:#fff"></div>
<div class="a" style="left:107.5px;top:516px;width:1.2px;height:1.2px;background:#fff"></div>
<div class="a" style="left:114px;top:516px;width:1.2px;height:1.2px;background:#fff"></div>
<div class="hd" style="left:265px">!</div>
<svg class="a" style="left:272px;top:84px" width="9" height="14" viewBox="0 0 9 14"><path d="M2 5v6a2.5 2.5 0 0 0 5 0V3.5a2 2 0 0 0-4 0V10a0.8 0.8 0 0 0 1.6 0V5" fill="none" stroke="#4a4a40" stroke-width="1.1"/></svg>
<div class="hd" style="left:284.3px;letter-spacing:0px">PID</div>
<div class="hd" style="left:384.8px;letter-spacing:0.32px">Předmět</div>
<div class="hd" style="left:473.3px;letter-spacing:0.32px">Odesílatel</div>
<div class="hd" style="left:547.3px;letter-spacing:0.32px">Adresát</div>
<div class="hd" style="left:620.8px;letter-spacing:0.32px">Typ dok.</div>
<div class="hd" style="left:674.8px;letter-spacing:0.32px">Ev. datum</div>
<div class="hd" style="left:723.8px;letter-spacing:0.32px">Zp.doruč.</div>
<div class="hd" style="left:780.3px;letter-spacing:0.32px">Poc</div>
<div class="a" style="left:382px;top:99px;width:1px;height:167px;background:#a89890"></div>
<div class="a" style="left:233px;top:100px;width:10px;height:165px;background:#d4d4d4;border:1px solid #f0f0f0;border-radius:5px;border-right-color:#c4b4b0;border-bottom-color:#c4b4b0"></div>
<div class="a" style="left:233px;top:110px;width:10px;height:1px;background:#c8b0aa"></div>
<div class="a" style="left:233px;top:255px;width:10px;height:1px;background:#f4f4f4"></div>
<svg class="a" style="left:235px;top:103px" width="6" height="4"><path d="M0 4L3 0.5 6 4z" fill="#8c8484"/></svg>
<svg class="a" style="left:235px;top:258px" width="6" height="4"><path d="M0 0L3 3.5 6 0z" fill="#8c8484"/></svg>
<div class="a" style="left:239.2px;top:157.5px;width:1.2px;height:1.2px;background:#fff"></div>
<div class="a" style="left:239.2px;top:164px;width:1.2px;height:1.2px;background:#fff"></div>
<div class="a" style="left:239.2px;top:170.5px;width:1.2px;height:1.2px;background:#fff"></div>
<div class="a" style="left:239.2px;top:177px;width:1.2px;height:1.2px;background:#fff"></div>
<div class="a" style="left:239.2px;top:183.5px;width:1.2px;height:1.2px;background:#fff"></div>
<div class="a" style="left:235.6px;top:161px;width:1.2px;height:1.2px;background:#fff"></div>
<div class="a" style="left:235.6px;top:167.5px;width:1.2px;height:1.2px;background:#fff"></div>
<div class="a" style="left:235.6px;top:174px;width:1.2px;height:1.2px;background:#fff"></div>
<div class="a" style="left:235.6px;top:180.5px;width:1.2px;height:1.2px;background:#fff"></div>
<div class="a" style="left:245px;top:99px;width:14px;height:15px;background:#bcdcf8;border-top:1px dotted #304060;border-bottom:1px dotted #304060"></div>
<div class="cb" style="left:246px;top:102px;background:#fff"></div>
<div class="cell" style="left:260px;top:100px;width:10.5px;background:#b4f0a4"></div>
<div class="cell act" style="left:272px;top:100px;width:10.5px;padding-left:1.5px">A</div>
<div class="cell act" style="left:284px;top:100px;width:96px">UKPRF2016000232</div>
<div class="cell act" style="left:384.5px;top:100px;width:86.5px;letter-spacing:0.27px">Smlouva č. 1216K000001</div>
<div class="cell act" style="left:473px;top:100px;width:72px">ISRS - Registrace smluv</div>
<div class="cell act" style="left:547px;top:100px;width:71.5px">Registr smluv (Ministerstvo vnitra)</div>
<div class="cell act" style="left:620.5px;top:100px;width:52.5px">Datová zpráva k RS</div>
<div class="cell act" style="left:674.5px;top:100px;width:47px">14.09.2016</div>
<div class="cell act" style="left:723.5px;top:100px;width:54.5px">Datová schránka</div>
<div class="cell act" style="left:780px;top:100px;width:14.5px">5016900</div>
<div class="cb" style="left:246px;top:117.1px"></div>
<div class="cell" style="left:260px;top:115.1px;width:10.5px;"></div>
<div class="cell" style="left:272px;top:115.1px;width:10.5px;padding-left:1.5px"></div>
<div class="cell" style="left:284px;top:115.1px;width:96px"></div>
<div class="cell" style="left:384.5px;top:115.1px;width:86.5px"></div>
<div class="cell" style="left:473px;top:115.1px;width:72px"></div>
<div class="cell" style="left:547px;top:115.1px;width:71.5px"></div>
<div class="cell" style="left:620.5px;top:115.1px;width:52.5px"></div>
<div class="cell" style="left:674.5px;top:115.1px;width:47px"></div>
<div class="cell" style="left:723.5px;top:115.1px;width:54.5px"></div>
<div class="cell" style="left:780px;top:115.1px;width:14.5px"></div>
<div class="cb" style="left:246px;top:132.2px"></div>
<div class="cell" style="left:260px;top:130.2px;width:10.5px;"></div>
<div class="cell" style="left:272px;top:130.2px;width:10.5px;padding-left:1.5px"></div>
<div class="cell" style="left:284px;top:130.2px;width:96px"></div>
<div class="cell" style="left:384.5px;top:130.2px;width:86.5px"></div>
<div class="cell" style="left:473px;top:130.2px;width:72px"></div>
<div class="cell" style="left:547px;top:130.2px;width:71.5px"></div>
<div class="cell" style="left:620.5px;top:130.2px;width:52.5px"></div>
<div class="cell" style="left:674.5px;top:130.2px;width:47px"></div>
<div class="cell" style="left:723.5px;top:130.2px;width:54.5px"></div>
<div class="cell" style="left:780px;top:130.2px;width:14.5px"></div>
<div class="cb" style="left:246px;top:147.3px"></div>
<div class="cell" style="left:260px;top:145.3px;width:10.5px;"></div>
<div class="cell" style="left:272px;top:145.3px;width:10.5px;padding-left:1.5px"></div>
<div class="cell" style="left:284px;top:145.3px;width:96px"></div>
<div class="cell" style="left:384.5px;top:145.3px;width:86.5px"></div>
<div class="cell" style="left:473px;top:145.3px;width:72px"></div>
<div class="cell" style="left:547px;top:145.3px;width:71.5px"></div>
<div class="cell" style="left:620.5px;top:145.3px;width:52.5px"></div>
<div class="cell" style="left:674.5px;top:145.3px;width:47px"></div>
<div class="cell" style="left:723.5px;top:145.3px;width:54.5px"></div>
<div class="cell" style="left:780px;top:145.3px;width:14.5px"></div>
<div class="cb" style="left:246px;top:162.4px"></div>
<div class="cell" style="left:260px;top:160.4px;width:10.5px;"></div>
<div class="cell" style="left:272px;top:160.4px;width:10.5px;padding-left:1.5px"></div>
<div class="cell" style="left:284px;top:160.4px;width:96px"></div>
<div class="cell" style="left:384.5px;top:160.4px;width:86.5px"></div>
<div class="cell" style="left:473px;top:160.4px;width:72px"></div>
<div class="cell" style="left:547px;top:160.4px;width:71.5px"></div>
<div class="cell" style="left:620.5px;top:160.4px;width:52.5px"></div>
<div class="cell" style="left:674.5px;top:160.4px;width:47px"></div>
<div class="cell" style="left:723.5px;top:160.4px;width:54.5px"></div>
<div class="cell" style="left:780px;top:160.4px;width:14.5px"></div>
<div class="cb" style="left:246px;top:177.5px"></div>
<div class="cell" style="left:260px;top:175.5px;width:10.5px;"></div>
<div class="cell" style="left:272px;top:175.5px;width:10.5px;padding-left:1.5px"></div>
<div class="cell" style="left:284px;top:175.5px;width:96px"></div>
<div class="cell" style="left:384.5px;top:175.5px;width:86.5px"></div>
<div class="cell" style="left:473px;top:175.5px;width:72px"></div>
<div class="cell" style="left:547px;top:175.5px;width:71.5px"></div>
<div class="cell" style="left:620.5px;top:175.5px;width:52.5px"></div>
<div class="cell" style="left:674.5px;top:175.5px;width:47px"></div>
<div class="cell" style="left:723.5px;top:175.5px;width:54.5px"></div>
<div class="cell" style="left:780px;top:175.5px;width:14.5px"></div>
<div class="cb" style="left:246px;top:192.6px"></div>
<div class="cell" style="left:260px;top:190.6px;width:10.5px;"></div>
<div class="cell" style="left:272px;top:190.6px;width:10.5px;padding-left:1.5px"></div>
<div class="cell" style="left:284px;top:190.6px;width:96px"></div>
<div class="cell" style="left:384.5px;top:190.6px;width:86.5px"></div>
<div class="cell" style="left:473px;top:190.6px;width:72px"></div>
<div class="cell" style="left:547px;top:190.6px;width:71.5px"></div>
<div class="cell" style="left:620.5px;top:190.6px;width:52.5px"></div>
<div class="cell" style="left:674.5px;top:190.6px;width:47px"></div>
<div class="cell" style="left:723.5px;top:190.6px;width:54.5px"></div>
<div class="cell" style="left:780px;top:190.6px;width:14.5px"></div>
<div class="cb" style="left:246px;top:207.7px"></div>
<div class="cell" style="left:260px;top:205.7px;width:10.5px;"></div>
<div class="cell" style="left:272px;top:205.7px;width:10.5px;padding-left:1.5px"></div>
<div class="cell" style="left:284px;top:205.7px;width:96px"></div>
<div class="cell" style="left:384.5px;top:205.7px;width:86.5px"></div>
<div class="cell" style="left:473px;top:205.7px;width:72px"></div>
<div class="cell" style="left:547px;top:205.7px;width:71.5px"></div>
<div class="cell" style="left:620.5px;top:205.7px;width:52.5px"></div>
<div class="cell" style="left:674.5px;top:205.7px;width:47px"></div>
<div class="cell" style="left:723.5px;top:205.7px;width:54.5px"></div>
<div class="cell" style="left:780px;top:205.7px;width:14.5px"></div>
<div class="cb" style="left:246px;top:222.8px"></div>
<div class="cell" style="left:260px;top:220.8px;width:10.5px;"></div>
<div class="cell" style="left:272px;top:220.8px;width:10.5px;padding-left:1.5px"></div>
<div class="cell" style="left:284px;top:220.8px;width:96px"></div>
<div class="cell" style="left:384.5px;top:220.8px;width:86.5px"></div>
<div class="cell" style="left:473px;top:220.8px;width:72px"></div>
<div class="cell" style="left:547px;top:220.8px;width:71.5px"></div>
<div class="cell" style="left:620.5px;top:220.8px;width:52.5px"></div>
<div class="cell" style="left:674.5px;top:220.8px;width:47px"></div>
<div class="cell" style="left:723.5px;top:220.8px;width:54.5px"></div>
<div class="cell" style="left:780px;top:220.8px;width:14.5px"></div>
<div class="cb" style="left:246px;top:237.9px"></div>
<div class="cell" style="left:260px;top:235.9px;width:10.5px;"></div>
<div class="cell" style="left:272px;top:235.9px;width:10.5px;padding-left:1.5px"></div>
<div class="cell" style="left:284px;top:235.9px;width:96px"></div>
<div class="cell" style="left:384.5px;top:235.9px;width:86.5px"></div>
<div class="cell" style="left:473px;top:235.9px;width:72px"></div>
<div class="cell" style="left:547px;top:235.9px;width:71.5px"></div>
<div class="cell" style="left:620.5px;top:235.9px;width:52.5px"></div>
<div class="cell" style="left:674.5px;top:235.9px;width:47px"></div>
<div class="cell" style="left:723.5px;top:235.9px;width:54.5px"></div>
<div class="cell" style="left:780px;top:235.9px;width:14.5px"></div>
<div class="cb" style="left:246px;top:253px"></div>
<div class="cell" style="left:260px;top:251px;width:10.5px;"></div>
<div class="cell" style="left:272px;top:251px;width:10.5px;padding-left:1.5px"></div>
<div class="cell" style="left:284px;top:251px;width:96px"></div>
<div class="cell" style="left:384.5px;top:251px;width:86.5px"></div>
<div class="cell" style="left:473px;top:251px;width:72px"></div>
<div class="cell" style="left:547px;top:251px;width:71.5px"></div>
<div class="cell" style="left:620.5px;top:251px;width:52.5px"></div>
<div class="cell" style="left:674.5px;top:251px;width:47px"></div>
<div class="cell" style="left:723.5px;top:251px;width:54.5px"></div>
<div class="cell" style="left:780px;top:251px;width:14.5px"></div>
<div class="a" style="left:794.5px;top:78px;width:4px;height:442px;background:#dcdcdc"></div>
<div class="a" style="left:797px;top:40px;width:1px;height:480px;background:#f0f0f0"></div>
<div class="a" style="left:798px;top:40px;width:2px;height:480px;background:linear-gradient(#a8a8a8,#606060 60px,#707070 300px,#888 480px)"></div>
<div class="a" style="left:233px;top:270px;width:15px;height:15px;background:#e2521e;border:1px solid #c84818"><svg class="a" style="left:2px;top:2px" width="9" height="9" viewBox="0 0 9 9"><rect x="0" y="0" width="9" height="9" fill="#fff"/><path d="M0 9V0.5h9" fill="none" stroke="#504848" stroke-width="1"/><path d="M1.8 3.8l2.2 2.7 4-5" fill="none" stroke="#181010" stroke-width="1.9"/></svg></div>
<div class="a" style="left:250px;top:270px;width:15px;height:15px;background:#ffff94;border:1px solid #c8c870"><svg class="a" style="left:2px;top:2px" width="9" height="9" viewBox="0 0 9 9"><rect x="0" y="0" width="9" height="9" fill="#fff"/><path d="M0 9V0.5h9" fill="none" stroke="#504848" stroke-width="1"/><path d="M1.8 3.8l2.2 2.7 4-5" fill="none" stroke="#181010" stroke-width="1.9"/></svg></div>
<div class="a" style="left:267px;top:270px;width:15px;height:15px;background:#ffffff;border:1px solid #c8c8c8"><svg class="a" style="left:2px;top:2px" width="9" height="9" viewBox="0 0 9 9"><rect x="0" y="0" width="9" height="9" fill="#fff"/><path d="M0 9V0.5h9" fill="none" stroke="#504848" stroke-width="1"/><path d="M1.8 3.8l2.2 2.7 4-5" fill="none" stroke="#181010" stroke-width="1.9"/></svg></div>
<div class="a" style="left:291px;top:270px;width:15px;height:15px;background:#c2f2c2;border:1px solid #98c098"><svg class="a" style="left:2px;top:2px" width="9" height="9" viewBox="0 0 9 9"><rect x="0" y="0" width="9" height="9" fill="#fff"/><path d="M0 9V0.5h9" fill="none" stroke="#504848" stroke-width="1"/><path d="M1.8 3.8l2.2 2.7 4-5" fill="none" stroke="#181010" stroke-width="1.9"/></svg></div>
<div class="a" style="left:384px;top:270px;width:410px;height:11px;background:#cbaaa3"></div>
<div class="a" style="left:384px;top:270px;width:12px;height:11px;background:#d8d8d8;border:1px solid #cbb0aa;border-radius:4px 0 0 4px"></div>
<svg class="a" style="left:388px;top:272.5px" width="4" height="6"><path d="M4 0L0.5 3 4 6z" fill="#706868"/></svg>
<div class="a" style="left:396px;top:270px;width:75px;height:11px;background:#d6d6d6;border:1px solid #e8e8e8;border-right-color:#c0b0ac;border-bottom-color:#b8a8a4"></div>
<div class="a" style="left:783px;top:270px;width:11px;height:11px;background:#d8d8d8;border:1px solid #cbb0aa;border-radius:0 4px 4px 0"></div>
<svg class="a" style="left:787px;top:272.5px" width="4" height="6"><path d="M0 0L3.5 3 0 6z" fill="#8c8484"/></svg>
<div class="a" style="left:427px;top:272.5px;width:1.2px;height:1.2px;background:#fff"></div>
<div class="a" style="left:433.4px;top:272.5px;width:1.2px;height:1.2px;background:#fff"></div>
<div class="a" style="left:439.8px;top:272.5px;width:1.2px;height:1.2px;background:#fff"></div>
<div class="a" style="left:423.6px;top:276.5px;width:1.2px;height:1.2px;background:#fff"></div>
<div class="a" style="left:430.1px;top:276.5px;width:1.2px;height:1.2px;background:#fff"></div>
<div class="a" style="left:436.6px;top:276.5px;width:1.2px;height:1.2px;background:#fff"></div>
<div class="a" style="left:443.1px;top:276.5px;width:1.2px;height:1.2px;background:#fff"></div>
<div class="a" id="pane"></div>
<div class="tab on" style="left:233px;width:65px">Základní úd.</div>
<div class="tab" style="left:302px;width:61px">Adresy</div>
<div class="tab" style="left:364.5px;width:68.5px">Doplňující úd.</div>
<div class="tab" style="left:435.5px;width:62.5px">Přílohy</div>
<div class="tab" style="left:500.5px;width:61.5px">Doklady</div>
<div class="tab" style="left:564px;width:62.5px">Půjčky</div>
<div class="tab" style="left:629px;width:61.5px">Doručení</div>
<div class="tab" style="left:693px;width:61px">Historie</div>
<div class="lb" style="left:210px;top:337px;width:80px">PID</div>
<div class="f g" style="left:294.5px;top:337px;width:108.5px">UKPRF2016000232</div>
<div class="lb" style="left:210px;top:356px;width:80px">Iniciac. PID</div>
<div class="f " style="left:294.5px;top:356px;width:108.5px"></div>
<div class="lb" style="left:210px;top:375px;width:80px">Předmět</div>
<div class="f p" style="left:294.5px;top:375px;width:326px">Smlouva č. 1216K000001</div>
<div class="lb" style="left:210px;top:394px;width:80px">Typ dok.</div>
<div class="f p" style="left:294.5px;top:394px;width:108.5px">Datová zpráva k RS</div>
<div class="lb" style="left:210px;top:413px;width:80px">č.j. naše</div>
<div class="f " style="left:294.5px;top:413px;width:108.5px"></div>
<div class="lb" style="left:210px;top:432px;width:80px">Spis</div>
<div class="f " style="left:294.5px;top:432px;width:162.5px"></div>
<div class="a" style="left:437.5px;top:337.5px;width:48px;height:13px;background:#e2e2e2;border:1px solid;border-color:#f8f8f8 #a89c98 #a89c98 #f8f8f8;border-radius:2px;font-size:8.4px;line-height:11px;text-align:center;color:#202020">Související</div>
<div class="lb" style="left:385.5px;top:356px;width:80px">Upozornění</div>
<div class="f " style="left:473px;top:356px;width:13.5px"></div>
<div class="a" style="left:408px;top:415.5px;width:12.5px;height:12px;background:#e0e0e0;border:1px solid;border-color:#f8f8f8 #b0a4a0 #b0a4a0 #f8f8f8;font-size:7px;line-height:10px;text-align:center;color:#b0a4a0">či</div>
<div class="lb" style="left:473px;top:337px;width:80px">Původ</div>
<div class="f g" style="left:558px;top:337px;width:62.5px">Vlastní</div>
<div class="lb" style="left:473px;top:356px;width:80px">Práv.váha</div>
<div class="f p" style="left:558px;top:356px;width:62.5px">Originál</div>
<div class="lb" style="left:427.5px;top:394px;width:80px">Zp. doručení</div>
<div class="f p" style="left:514.5px;top:394px;width:106px">Datová schránka</div>
<div class="lb" style="left:427.5px;top:413px;width:80px">č.j. vaše</div>
<div class="f " style="left:514.5px;top:413px;width:106px"></div>
<div class="lb" style="left:428.5px;top:432px;width:80px">Stav dok.</div>
<div class="f g" style="left:514.5px;top:432px;width:106px">Aktivní</div>
<div class="lb" style="left:620.5px;top:337px;width:80px">Forma</div>
<div class="f " style="left:707px;top:337px;width:47.5px">Digitální</div>
<div class="lb" style="left:620.5px;top:356px;width:80px">Podací č.</div>
<div class="f " style="left:707px;top:356px;width:47.5px">5016900</div>
<div class="lb" style="left:620.5px;top:375px;width:80px">Ev. datum</div>
<div class="f g" style="left:707px;top:375px;width:47.5px">14.09.2016</div>
<div class="lb" style="left:620.5px;top:394px;width:80px">Podací dat.</div>
<div class="f " style="left:707px;top:394px;width:47.5px"></div>
<div class="lb" style="left:620.5px;top:413px;width:80px">Dat. převzetí</div>
<div class="f " style="left:707px;top:413px;width:47.5px"></div>
<div class="lb" style="left:620.5px;top:432px;width:80px">Posl. pohyb</div>
<div class="f g" style="left:707px;top:432px;width:47.5px">14.09.2016</div>
<div class="a" style="left:243.5px;top:459px;width:537px;height:2px;border-top:1px solid #8c8c8c;border-bottom:1px solid #f6f6f6"></div>
<div class="lb" style="left:251px;top:471.5px;width:60px;text-align:left;line-height:10.8px;height:22px">Vyřizuje/<br>Uloženo</div>
<div class="f " style="left:295px;top:473px;width:247.5px"></div>
<div class="lb" style="left:210.5px;top:492.5px;width:80px">Zp. vyřiz.</div>
<div class="f " style="left:295px;top:492.5px;width:155.5px"></div>
<div class="lb" style="left:429px;top:492.5px;width:80px">Stav vyřiz.</div>
<div class="f " style="left:514.5px;top:492.5px;width:106px">Vyřízeno</div>
<div class="lb" style="left:524.5px;top:473px;width:80px">Předáno</div>
<div class="cb" style="left:612px;top:475.5px;background:#fff"></div>
<div class="lb" style="left:620.5px;top:473px;width:80px">Vyřídit do</div>
<div class="f " style="left:707px;top:473px;width:47.5px"></div>
<div class="lb" style="left:620.5px;top:492.5px;width:80px">Dat. vyřízení</div>
<div class="f " style="left:707px;top:492.5px;width:47.5px">14.09.2016</div>
<div class="a" id="status"></div>
<div class="a" style="left:0;top:520.5px;width:800px;height:1.5px;background:#3a2e2c"></div>
<div class="a" style="left:0;top:522px;width:1.5px;height:36px;background:#7c7c7c"></div>
<div class="a" id="sbox"></div>
<div class="a" style="left:4px;top:537px;width:791.5px;height:2px;border-top:1px solid #41342f;border-bottom:1px solid #7a7472"></div>
<div class="a" style="left:8.7px;top:524.3px;font-size:9.55px;line-height:12px;color:#ececec;white-space:nowrap;-webkit-text-stroke-width:0.3px">Výběr dokumentů určených k provedení akce</div>
<div class="a" style="left:8.7px;top:538.8px;font-size:9.55px;line-height:12px;color:#ececec;white-space:nowrap;-webkit-text-stroke-width:0.3px">Záznam: 1/1</div>
<div class="a" style="left:183.5px;top:538.8px;font-size:9.55px;line-height:12px;color:#ececec">...</div>
<div class="a" style="left:327.5px;top:538.8px;font-size:9.55px;line-height:12px;color:#ececec">&lt;OSC&gt;</div>
<div class="a" style="left:110px;top:539.5px;width:2px;height:11.5px;border-left:1px solid #4a3e3c;border-right:1px solid #b8a6a2"></div>
<div class="a" style="left:133px;top:539.5px;width:2px;height:11.5px;border-left:1px solid #4a3e3c;border-right:1px solid #b8a6a2"></div>
<div class="a" style="left:196.5px;top:539.5px;width:2px;height:11.5px;border-left:1px solid #4a3e3c;border-right:1px solid #b8a6a2"></div>
<div class="a" style="left:276.5px;top:539.5px;width:2px;height:11.5px;border-left:1px solid #4a3e3c;border-right:1px solid #b8a6a2"></div>
<div class="a" style="left:319px;top:539.5px;width:2px;height:11.5px;border-left:1px solid #4a3e3c;border-right:1px solid #b8a6a2"></div>
<div class="a" style="left:784px;top:524px;width:2px;height:13px;border-left:1px solid #4a3e3c;border-right:1px solid #b8a6a2"></div>
</div></body></html>
